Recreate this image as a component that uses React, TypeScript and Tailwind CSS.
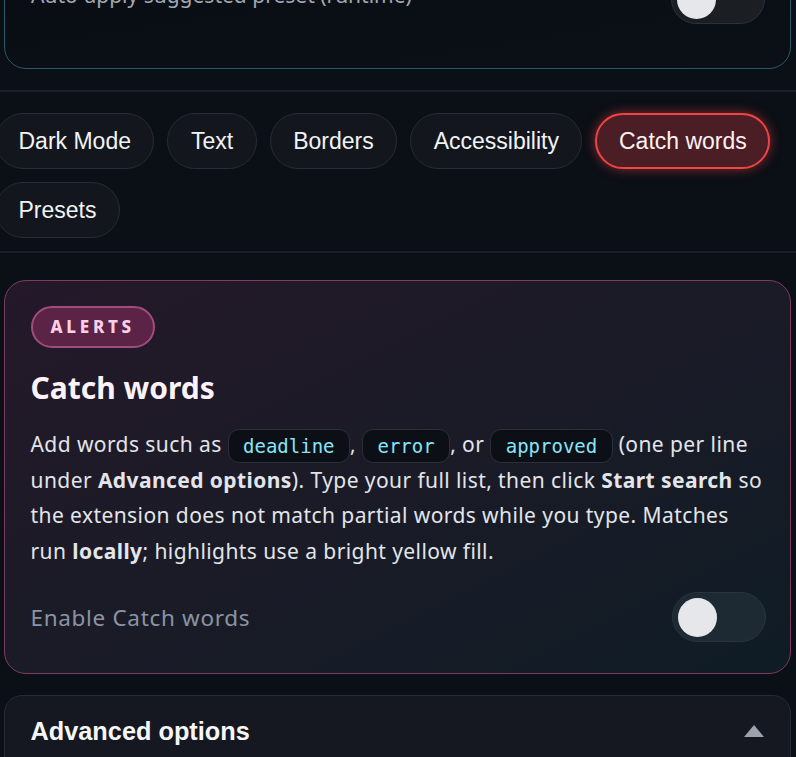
import React from "react";

function Toggle({ track }: { track: string }) {
  return (
    <div
      className={`flex h-[50px] w-[94px] shrink-0 items-center rounded-full border-[1.5px] border-[#2a323b] px-[5px] ${track}`}
    >
      <div className="h-[39px] w-[39px] rounded-full bg-[#e5e7eb]" />
    </div>
  );
}

function Chip({ label, active }: { label: string; active?: boolean }) {
  return (
    <div
      className={
        active
          ? "flex h-[56px] items-center rounded-full border-2 border-[#ef4444] bg-[#4b1d24] px-[21.5px] text-[23px] text-[#fdf2f2] shadow-[0_0_12px_rgba(239,68,68,0.55)]"
          : "flex h-[56px] items-center rounded-full border border-[#272b33] bg-[#13171d] px-[22.5px] text-[23px] text-[#f1f3f6]"
      }
    >
      {label}
    </div>
  );
}

function Code({ children }: { children: React.ReactNode }) {
  return (
    <span className="inline-block rounded-[11px] border-[1.5px] border-[#2a2f38] bg-[#0c1016] px-[14.5px] align-middle leading-[32px] tracking-normal text-[19px] text-[#86e6f7] [font-family:'DejaVu_Sans_Mono',monospace]">
      {children}
    </span>
  );
}

export default function App() {
  return (
    <div className="min-h-[757px] w-[796px] overflow-hidden bg-[#0b0f16] [font-family:'Noto_Sans',sans-serif]">
      <div className="mt-[-54px] pl-[4px] pr-[5px]">
        <div className="rounded-[22px] border-[1.5px] border-[#295867] bg-gradient-to-br from-[#090d13] to-[#0b1017] pb-[44px] pl-[26px] pr-[25px] pt-[27px]">
          <div className="flex h-[50px] items-center justify-between">
            <span className="mt-[-6px] text-[21px] text-[#a1a8b3]">
              Auto-apply suggested preset (runtime)
            </span>
            <Toggle track="bg-[#1b1e23]" />
          </div>
        </div>
      </div>

      <div className="mt-[21px] border-t-2 border-[#1b1f27]" />

      <div className="ml-[-5px] flex flex-wrap gap-[13px] pb-[13px] pt-[21px] [font-family:'Liberation_Sans',Arial,sans-serif]">
        <Chip label="Dark Mode" />
        <Chip label="Text" />
        <Chip label="Borders" />
        <Chip label="Accessibility" />
        <Chip label="Catch words" active />
        <Chip label="Presets" />
      </div>

      <div className="border-t-2 border-[#1b1f27]" />

      <div className="mt-[27px] pl-[4px] pr-[5px]">
        <div className="rounded-[22px] border-[1.5px] border-[#7d3b63] bg-gradient-to-br from-[#241829] via-[#1a1b27] to-[#0f1c25] pb-[31px] pl-[25.5px] pr-[10px] pt-[24.5px]">
          <div className="flex">
            <span className="rounded-full border-2 border-[#a14c7d] bg-[#5b2446] px-[18px] text-[17px] font-extrabold leading-[38px] tracking-[0.22em] text-[#fbcfe8]">
              ALERTS
            </span>
          </div>
          <h2 className="mt-[22px] text-[30px] font-bold leading-[36px] text-[#fdf2f8]">
            Catch words
          </h2>
          <p className="mt-[21px] whitespace-nowrap text-[21px] leading-[35.5px] tracking-[0.02em] text-[#e3e5ea]">
            Add words such as <Code>deadline</Code>, <Code>error</Code>, or{" "}
            <Code>approved</Code> (one per line
            <br />
            under <b className="font-bold">Advanced options</b>). Type your full
            list, then click <b className="font-bold">Start search</b> so
            <br />
            the extension does not match partial words while you type. Matches
            <br />
            run <b className="font-bold">locally</b>; highlights use a bright
            yellow fill.
          </p>
          <div className="mr-[14px] mt-[23px] flex h-[50px] items-center justify-between">
            <span className="text-[22.5px] tracking-[0.03em] text-[#8a94a3]">
              Enable Catch words
            </span>
            <Toggle track="bg-[#1e2a33]" />
          </div>
        </div>
      </div>

      <div className="mt-[21px] pl-[4px] pr-[5px]">
        <div className="rounded-[18px] border-[1.5px] border-[#252a33] bg-[#151820] pb-[24px] pl-[25.5px] pr-[25px] pt-[20px]">
          <div className="flex items-center justify-between">
            <span className="text-[25.3px] font-bold leading-[30px] text-[#f5f6f8] [font-family:'Liberation_Sans',Arial,sans-serif]">
              Advanced options
            </span>
            <svg width="20" height="12" viewBox="0 0 20 12" className="mr-[1px]">
              <polygon points="10,0 20,12 0,12" fill="#9ca3af" />
            </svg>
          </div>
          <div className="h-[60px]" />
        </div>
      </div>
    </div>
  );
}
